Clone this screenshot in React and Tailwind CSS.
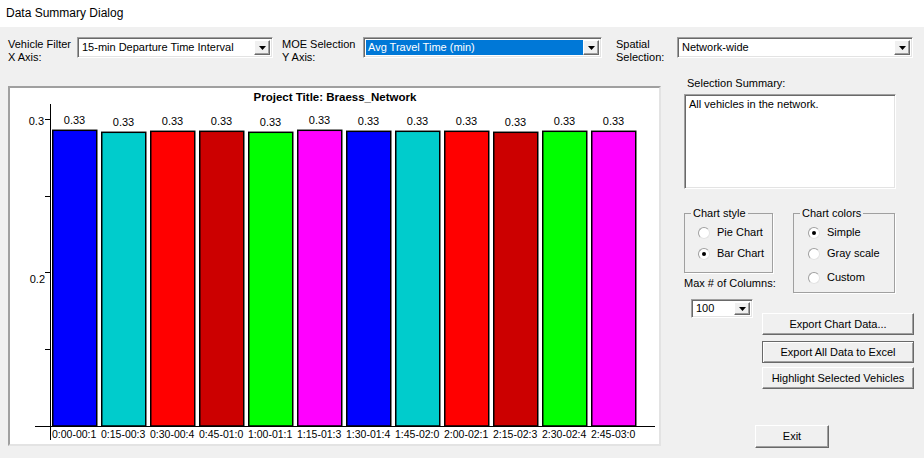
import React from "react"

const bars = [
  { label: "0:00-00:1", color: "#0000ff", top: 130.3 },
  { label: "0:15-00:3", color: "#00cccc", top: 132.3 },
  { label: "0:30-00:4", color: "#ff0000", top: 131.3 },
  { label: "0:45-01:0", color: "#cc0000", top: 131.3 },
  { label: "1:00-01:1", color: "#00ff00", top: 132.3 },
  { label: "1:15-01:3", color: "#ff00ff", top: 130.3 },
  { label: "1:30-01:4", color: "#0000ff", top: 131.3 },
  { label: "1:45-02:0", color: "#00cccc", top: 131.3 },
  { label: "2:00-02:1", color: "#ff0000", top: 131.3 },
  { label: "2:15-02:3", color: "#cc0000", top: 132.3 },
  { label: "2:30-02:4", color: "#00ff00", top: 131.3 },
  { label: "2:45-03:0", color: "#ff00ff", top: 131.3 },
]

function Arrow() {
  return (
    <div className="w-[16px] h-full bg-[#f0f0f0] border border-t-white border-l-white border-r-[#696969] border-b-[#696969] shadow-[inset_-1px_-1px_#a0a0a0] flex items-center justify-center">
      <svg width="7" height="4" viewBox="0 0 7 4">
        <polygon points="0,0 7,0 3.5,4" fill="black" />
      </svg>
    </div>
  )
}

function Combo({ value, selected, className }) {
  return (
    <div
      className={`flex items-stretch bg-white border border-t-[#a0a0a0] border-l-[#a0a0a0] border-r-white border-b-white shadow-[inset_1px_1px_#696969,inset_-1px_-1px_#e3e3e3] p-[2px] ${className}`}
    >
      <div
        className={`flex-1 flex items-center pl-[2px] whitespace-nowrap ${selected ? "bg-[#0078d7] text-white" : ""}`}
      >
        {value}
      </div>
      <Arrow />
    </div>
  )
}

function Radio({ checked, label }) {
  return (
    <div className="flex items-center h-[21px]">
      <span className="w-[12px] h-[12px] rounded-full bg-white border border-t-[#a0a0a0] border-l-[#a0a0a0] border-r-[#e3e3e3] border-b-[#e3e3e3] flex items-center justify-center">
        {checked && <span className="w-[4px] h-[4px] rounded-full bg-black" />}
      </span>
      <span className="ml-[7px]">{label}</span>
    </div>
  )
}

function Btn({ children, isDefault, className }) {
  return (
    <button
      className={`flex items-center justify-center bg-[#f0f0f0] border ${
        isDefault
          ? "border-[#696969] shadow-[inset_1px_1px_white,inset_-1px_-1px_#a0a0a0]"
          : "border-t-white border-l-white border-r-[#696969] border-b-[#696969] shadow-[inset_-1px_-1px_#a0a0a0]"
      } ${className}`}
    >
      {children}
    </button>
  )
}

function Chart() {
  return (
    <svg width="649" height="356" viewBox="10 88 649 356" className="block" fontFamily="Liberation Sans, Arial, sans-serif">
      <text x="335" y="101" textAnchor="middle" fontWeight="bold" fontSize="11.5" fill="#000">
        Project Title: Braess_Network
      </text>
      <line x1="50.5" y1="104" x2="50.5" y2="440" stroke="black" />
      <line x1="35" y1="426.5" x2="655" y2="426.5" stroke="black" />
      {[119, 196, 272, 349].map((t) => (
        <line key={t} x1="45" y1={t + 0.5} x2="51" y2={t + 0.5} stroke="black" />
      ))}
      <text x="44" y="125" textAnchor="end" fontSize="11">0.3</text>
      <text x="45" y="283" textAnchor="end" fontSize="11">0.2</text>
      {bars.map((b, i) => {
        const x = 52 + 49 * i
        return (
          <g key={i}>
            <rect x={x + 0.75} y={b.top} width="44" height={426 - b.top} fill={b.color} stroke="black" strokeWidth="1.5" />
            <text x={x + 22.5} y={b.top - 6} textAnchor="middle" fontSize="11">0.33</text>
            <text x={x} y="438" fontSize="10.5">{b.label}</text>
          </g>
        )
      })}
    </svg>
  )
}

export default function App() {
  return (
    <div className="w-[924px] h-[458px] overflow-hidden bg-[#f0f0f0] text-black text-[11px] leading-[13px] font-['Liberation_Sans',Arial,sans-serif]">
      <div className="h-[27px] bg-white flex items-center pl-[6px] text-[12px]">Data Summary Dialog</div>

      <div className="mt-[10px] h-[21px] pl-[8px] flex items-start">
        <div className="w-[69px] pt-[1px]">
          Vehicle Filter
          <br />
          X Axis:
        </div>
        <Combo value="15-min Departure Time Interval" className="w-[196px] h-[21px]" />
        <div className="ml-[9px] w-[81px] pt-[1px]">
          MOE Selection
          <br />
          Y Axis:
        </div>
        <Combo value="Avg Travel Time (min)" selected className="w-[239px] h-[21px]" />
        <div className="ml-[14px] w-[61px] pt-[1px]">
          Spatial
          <br />
          Selection:
        </div>
        <Combo value="Network-wide" className="w-[236px] h-[21px]" />
      </div>

      <div className="mt-[28px] pl-[8px] flex items-start">
        <div className="w-[653px] h-[360px] bg-white border-2 border-t-[#a0a0a0] border-l-[#a0a0a0] border-r-[#e3e3e3] border-b-[#e3e3e3]">
          <Chart />
        </div>

        <div className="ml-[23px] -mt-[9px] w-[230px] flex flex-col">
          <div className="pl-[3px]">Selection Summary:</div>
          <div className="mt-[4px] w-[212px] h-[95px] bg-white border border-t-[#a0a0a0] border-l-[#a0a0a0] border-r-white border-b-white shadow-[inset_1px_1px_#696969,inset_-1px_-1px_#e3e3e3] pl-[4px] pt-[3px]">
            All vehicles in the network.
          </div>

          <div className="mt-[18px] flex items-start">
            <div className="w-[89px]">
              <fieldset className="h-[66px] border border-[#a0a0a0] shadow-[1px_1px_white]">
                <legend className="ml-[6px] px-[2px]">Chart style</legend>
                <div className="mt-[2px] pl-[13px]">
                  <Radio label="Pie Chart" />
                  <Radio label="Bar Chart" checked />
                </div>
              </fieldset>
              <div className="mt-[4px] whitespace-nowrap">Max # of Columns:</div>
            </div>
            <fieldset className="ml-[20px] w-[102px] h-[86px] border border-[#a0a0a0] shadow-[1px_1px_white]">
              <legend className="ml-[6px] px-[2px]">Chart colors</legend>
              <div className="mt-[2px] pl-[14px]">
                <Radio label="Simple" checked />
                <Radio label="Gray scale" />
                <div className="mt-[3px]">
                  <Radio label="Custom" />
                </div>
              </div>
            </fieldset>
          </div>

          <div className="mt-[6px] flex items-start">
            <Combo value="100" className="ml-[7px] w-[62px] h-[19px]" />
            <div className="ml-[9px] mt-[14px] w-[152px] flex flex-col">
              <Btn className="h-[22px]">Export Chart Data...</Btn>
              <Btn isDefault className="mt-[6px] h-[22px]">Export All Data to Excel</Btn>
              <Btn className="mt-[4px] h-[22px]">Highlight Selected Vehicles</Btn>
            </div>
          </div>

          <Btn className="mt-[36px] ml-[71px] w-[74px] h-[23px]">Exit</Btn>
        </div>
      </div>
    </div>
  )
}
